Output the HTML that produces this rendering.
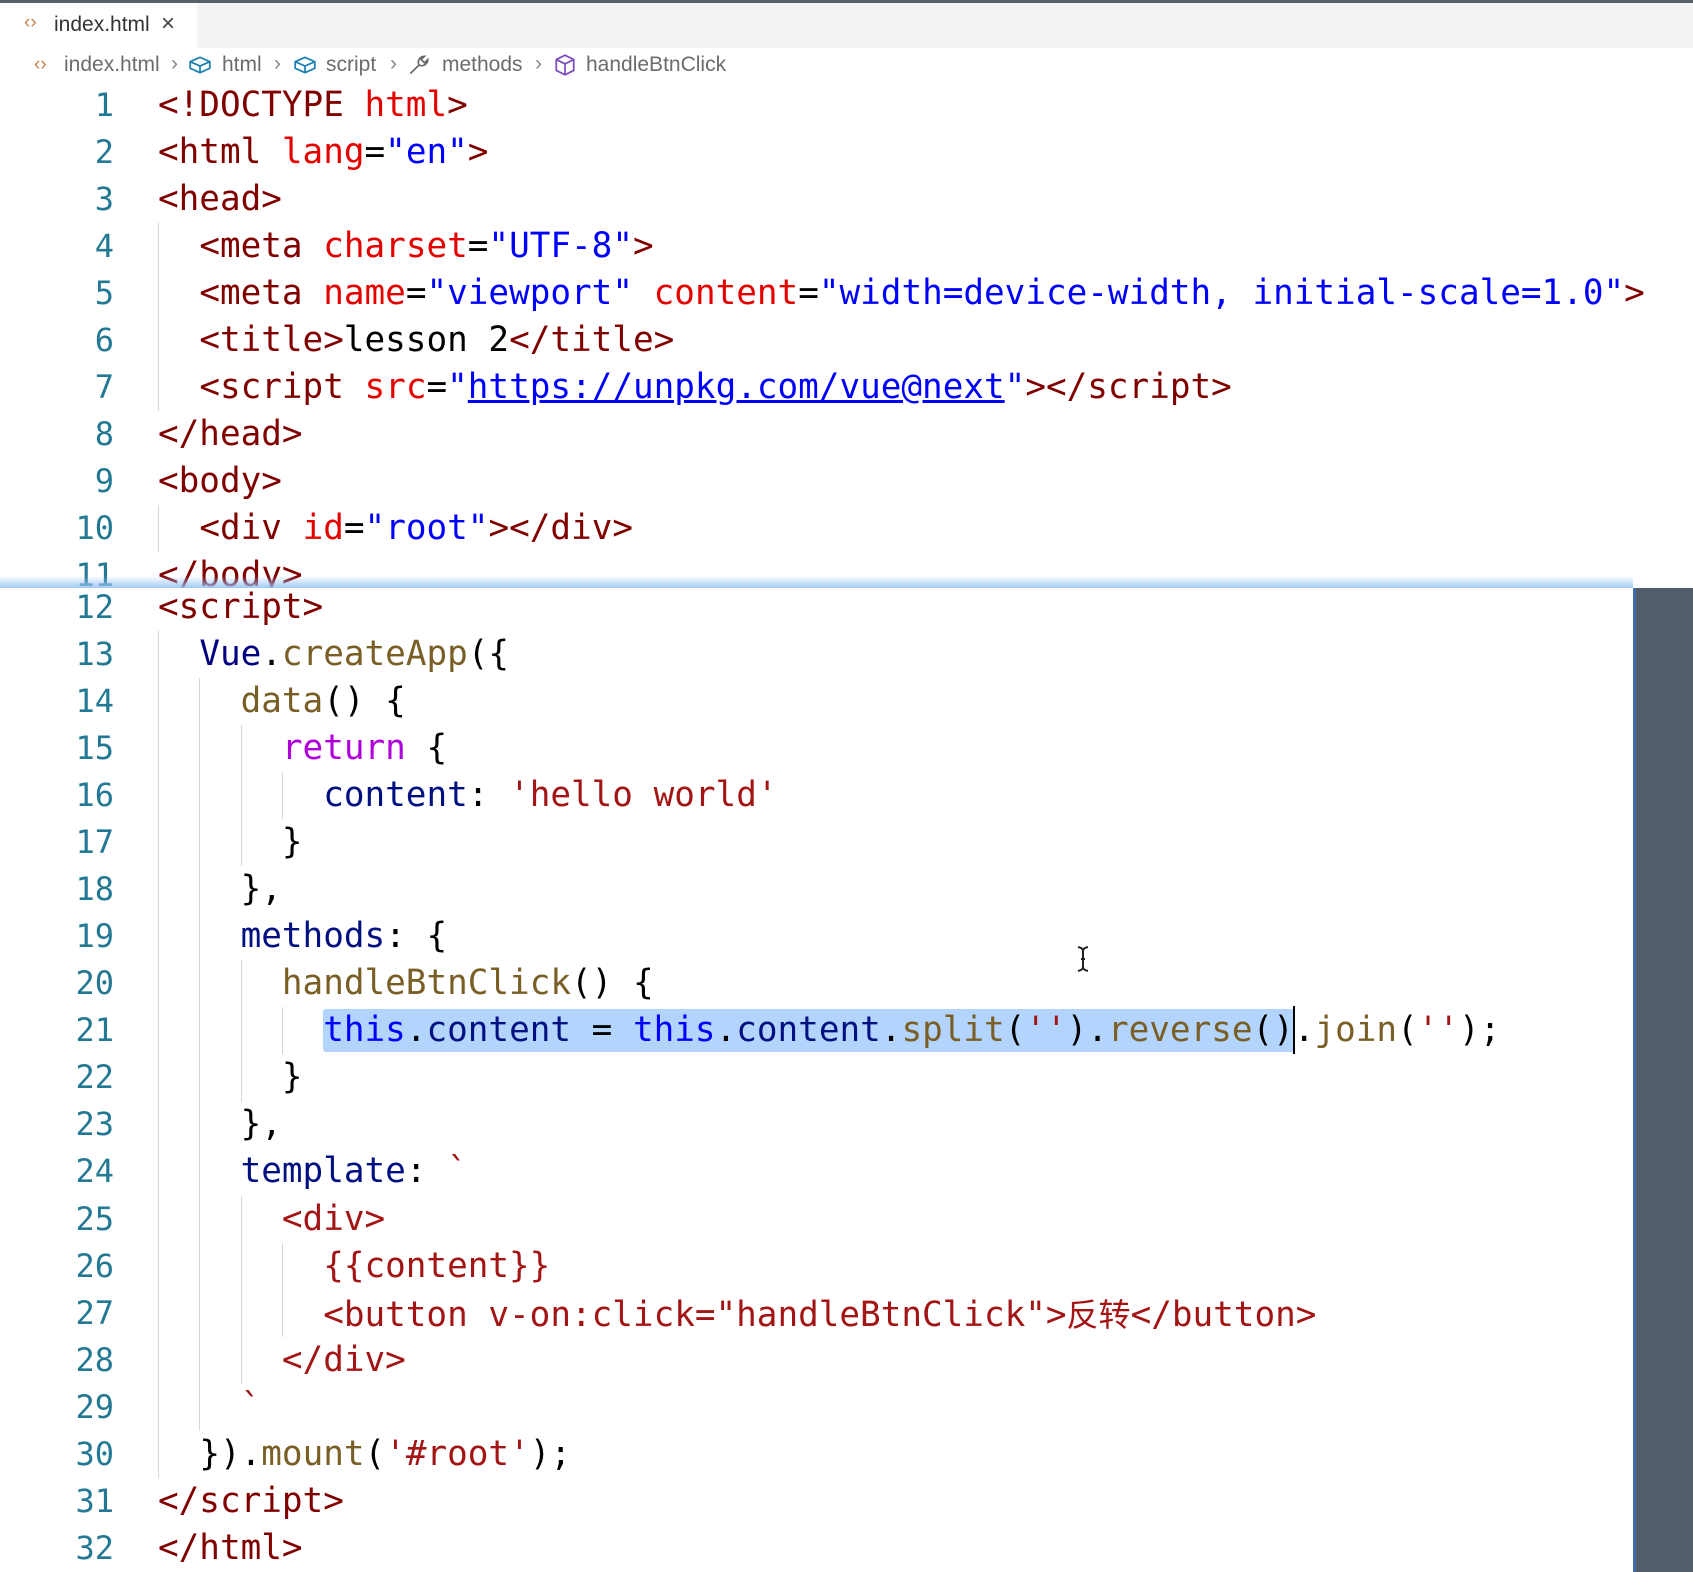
<!DOCTYPE html>
<html><head><meta charset="utf-8"><style>
*{margin:0;padding:0;box-sizing:border-box}
body{width:1693px;height:1572px;background:#fff;position:relative;overflow:hidden;font-family:"Liberation Sans",sans-serif}
#top{position:absolute;left:0;top:0;width:1693px;height:3px;background:#5a5f66}
#tabbar{position:absolute;left:0;top:3px;width:1693px;height:45px;background:#f3f3f3}
#tab{position:absolute;left:0;top:3px;width:197px;height:45px;background:#fff;font-size:21px;color:#333}
.bc{position:absolute;top:53px;font-size:21px;color:#6c6c6c;white-space:nowrap;line-height:24px}
.sep{position:absolute;top:52px;font-size:21px;color:#888;line-height:24px}
.code{position:absolute;font-family:"DejaVu Sans Mono","Liberation Mono",monospace;font-size:34.3px;white-space:pre;line-height:47px;height:47px}
.ln{position:absolute;width:114px;left:0;text-align:right;color:#237893;font-family:"DejaVu Sans Mono","Liberation Mono",monospace;font-size:32px;line-height:47px;height:47px}
.t{color:#800000}.a{color:#e50000}.s1{color:#0000ff}.k{color:#af00db}.f{color:#795e26}.v{color:#001080}.st{color:#a31515}.p{color:#000}.u{text-decoration:underline}
.g{position:absolute;width:1px;background:#d6d6d6}
#upper{position:absolute;left:0;top:0;width:1693px;height:588px;overflow:hidden}
#lower{position:absolute;left:0;top:0;width:1693px;height:1572px}
</style></head><body>
<div id="top"></div><div id="tabbar"></div>
<div id="tab"><span style="position:absolute;left:24px;top:9px;color:#c5824b;font-size:19px">‹›</span><span style="position:absolute;left:54px;top:10px">index.html</span><span style="position:absolute;left:161px;top:7px;font-size:24px;color:#444">×</span></div>

<span class="bc" style="left:34px;color:#c5824b;font-size:19px">‹›</span>
<span class="bc" style="left:64px">index.html</span><span class="sep" style="left:171px">›</span>
<svg style="position:absolute;left:188px;top:54px" width="24" height="22" viewBox="0 0 22 20"><path d="M2 7 L11 3 L20 7 L20 13 L11 17 L2 13Z M2 7 L11 11 L20 7 M11 11 L11 17" fill="none" stroke="#1b80b2" stroke-width="1.6"/></svg>
<span class="bc" style="left:222px">html</span><span class="sep" style="left:274px">›</span>
<svg style="position:absolute;left:293px;top:54px" width="24" height="22" viewBox="0 0 22 20"><path d="M2 7 L11 3 L20 7 L20 13 L11 17 L2 13Z M2 7 L11 11 L20 7 M11 11 L11 17" fill="none" stroke="#1b80b2" stroke-width="1.6"/></svg>
<span class="bc" style="left:326px">script</span><span class="sep" style="left:390px">›</span>
<svg style="position:absolute;left:407px;top:53px" width="24" height="24" viewBox="0 0 22 22"><path d="M3 19 L11 11 M11 11 C9 7 12 3 16 3 L13 6 L16 9 L19 6 C19 10 15 13 11 11" fill="none" stroke="#666" stroke-width="1.5"/></svg>
<span class="bc" style="left:442px">methods</span><span class="sep" style="left:535px">›</span>
<svg style="position:absolute;left:553px;top:53px" width="24" height="24" viewBox="0 0 22 22"><path d="M11 2 L19 6 L19 16 L11 20 L3 16 L3 6Z M3 6 L11 10 L19 6 M11 10 L11 20" fill="none" stroke="#7c4dbf" stroke-width="1.6"/></svg>
<span class="bc" style="left:586px">handleBtnClick</span>

<div id="upper"><div style="position:absolute;left:0;top:2px;width:1693px;height:600px">
<div class="g" style="left:158px;top:221px;height:188px"></div>
<div class="g" style="left:158px;top:503px;height:47px"></div>
<div class="ln" style="top:80px">1</div><div class="code" style="left:158px;top:80px"><span class="t">&lt;!DOCTYPE</span> <span class="a">html</span><span class="t">&gt;</span></div>
<div class="ln" style="top:127px">2</div><div class="code" style="left:158px;top:127px"><span class="t">&lt;html</span> <span class="a">lang</span><span class="p">=</span><span class="s1">"en"</span><span class="t">&gt;</span></div>
<div class="ln" style="top:174px">3</div><div class="code" style="left:158px;top:174px"><span class="t">&lt;head&gt;</span></div>
<div class="ln" style="top:221px">4</div><div class="code" style="left:158px;top:221px">  <span class="t">&lt;meta</span> <span class="a">charset</span><span class="p">=</span><span class="s1">"UTF-8"</span><span class="t">&gt;</span></div>
<div class="ln" style="top:268px">5</div><div class="code" style="left:158px;top:268px">  <span class="t">&lt;meta</span> <span class="a">name</span><span class="p">=</span><span class="s1">"viewport"</span> <span class="a">content</span><span class="p">=</span><span class="s1">"width=device-width, initial-scale=1.0"</span><span class="t">&gt;</span></div>
<div class="ln" style="top:315px">6</div><div class="code" style="left:158px;top:315px">  <span class="t">&lt;title&gt;</span><span class="p">lesson 2</span><span class="t">&lt;/title&gt;</span></div>
<div class="ln" style="top:362px">7</div><div class="code" style="left:158px;top:362px">  <span class="t">&lt;script</span> <span class="a">src</span><span class="p">=</span><span class="s1">"<span class="u">https://unpkg.com/vue@next</span>"</span><span class="t">&gt;&lt;/script&gt;</span></div>
<div class="ln" style="top:409px">8</div><div class="code" style="left:158px;top:409px"><span class="t">&lt;/head&gt;</span></div>
<div class="ln" style="top:456px">9</div><div class="code" style="left:158px;top:456px"><span class="t">&lt;body&gt;</span></div>
<div class="ln" style="top:503px">10</div><div class="code" style="left:158px;top:503px">  <span class="t">&lt;div</span> <span class="a">id</span><span class="p">=</span><span class="s1">"root"</span><span class="t">&gt;&lt;/div&gt;</span></div>
<div class="ln" style="top:550px">11</div><div class="code" style="left:158px;top:550px"><span class="t">&lt;/body&gt;</span></div>
</div></div>
<div style="position:absolute;left:0;top:576px;width:1633px;height:12px;background:linear-gradient(rgba(170,205,250,0),rgba(150,195,245,.9))"></div>
<div style="position:absolute;left:1633px;top:588px;width:60px;height:984px;background:#525d6a;border-left:3px solid #3d6ea8"></div>

<div id="lower">
<div class="g" style="left:158px;top:631px;height:847px"></div>
<div class="g" style="left:199px;top:678px;height:753px"></div>
<div class="g" style="left:241px;top:725px;height:141px"></div>
<div class="g" style="left:241px;top:960px;height:142px"></div>
<div class="g" style="left:241px;top:1196px;height:188px"></div>
<div class="g" style="left:282px;top:772px;height:47px"></div>
<div class="g" style="left:282px;top:1007px;height:47px"></div>
<div class="g" style="left:282px;top:1243px;height:94px"></div>
<div style="position:absolute;left:323px;top:1009px;width:971px;height:43px;background:#b3d4fc;border-radius:3px"></div>
<div style="position:absolute;left:1293px;top:1006px;width:2px;height:48px;background:#000"></div>

<div class="ln" style="top:584px">12</div><div class="code" style="left:158px;top:584px"><span class="t">&lt;script&gt;</span></div>
<div class="ln" style="top:631px">13</div><div class="code" style="left:158px;top:631px">  <span class="v" style="color:#000080">Vue</span><span class="p">.</span><span class="f">createApp</span><span class="p">({</span></div>
<div class="ln" style="top:678px">14</div><div class="code" style="left:158px;top:678px">    <span class="f">data</span><span class="p">() {</span></div>
<div class="ln" style="top:725px">15</div><div class="code" style="left:158px;top:725px">      <span class="k">return</span><span class="p"> {</span></div>
<div class="ln" style="top:772px">16</div><div class="code" style="left:158px;top:772px">        <span class="v">content</span><span class="p">: </span><span class="st">'hello world'</span></div>
<div class="ln" style="top:819px">17</div><div class="code" style="left:158px;top:819px">      <span class="p">}</span></div>
<div class="ln" style="top:866px">18</div><div class="code" style="left:158px;top:866px">    <span class="p">},</span></div>
<div class="ln" style="top:913px">19</div><div class="code" style="left:158px;top:913px">    <span class="v">methods</span><span class="p">: {</span></div>
<div class="ln" style="top:960px">20</div><div class="code" style="left:158px;top:960px">      <span class="f">handleBtnClick</span><span class="p">() {</span></div>
<div class="ln" style="top:1007px">21</div><div class="code" style="left:158px;top:1007px">        <span style="color:#0000ff">this</span><span class="p">.</span><span class="v">content</span><span class="p"> = </span><span style="color:#0000ff">this</span><span class="p">.</span><span class="v">content</span><span class="p">.</span><span class="f">split</span><span class="p">(</span><span class="st">''</span><span class="p">).</span><span class="f">reverse</span><span class="p">().</span><span class="f">join</span><span class="p">(</span><span class="st">''</span><span class="p">);</span></div>
<div class="ln" style="top:1054px">22</div><div class="code" style="left:158px;top:1054px">      <span class="p">}</span></div>
<div class="ln" style="top:1101px">23</div><div class="code" style="left:158px;top:1101px">    <span class="p">},</span></div>
<div class="ln" style="top:1148px">24</div><div class="code" style="left:158px;top:1148px">    <span class="v">template</span><span class="p">: </span><span class="st">`</span></div>
<div class="ln" style="top:1196px">25</div><div class="code" style="left:158px;top:1196px"><span class="st">      &lt;div&gt;</span></div>
<div class="ln" style="top:1243px">26</div><div class="code" style="left:158px;top:1243px"><span class="st">        {{content}}</span></div>
<div class="ln" style="top:1290px">27</div><div class="code" style="left:158px;top:1290px"><span class="st">        &lt;button v-on:click="handleBtnClick"&gt;</span><span class="st" style="font-family:'Noto Sans CJK SC',sans-serif;font-size:32px">反转</span><span class="st">&lt;/button&gt;</span></div>
<div class="ln" style="top:1337px">28</div><div class="code" style="left:158px;top:1337px"><span class="st">      &lt;/div&gt;</span></div>
<div class="ln" style="top:1384px">29</div><div class="code" style="left:158px;top:1384px"><span class="st">    `</span></div>
<div class="ln" style="top:1431px">30</div><div class="code" style="left:158px;top:1431px">  <span class="p">}).</span><span class="f">mount</span><span class="p">(</span><span class="st">'#root'</span><span class="p">);</span></div>
<div class="ln" style="top:1478px">31</div><div class="code" style="left:158px;top:1478px"><span class="t">&lt;/script&gt;</span></div>
<div class="ln" style="top:1525px">32</div><div class="code" style="left:158px;top:1525px"><span class="t">&lt;/html&gt;</span></div>
</div>

<svg style="position:absolute;left:1076px;top:945px" width="14" height="28" viewBox="0 0 14 28"><path d="M2 2 Q7 3 7 6 L7 22 Q7 25 2 26 M12 2 Q7 3 7 6 M7 22 Q7 25 12 26 M5 14 L9 14" fill="none" stroke="#222" stroke-width="2"/></svg>
</body></html>
